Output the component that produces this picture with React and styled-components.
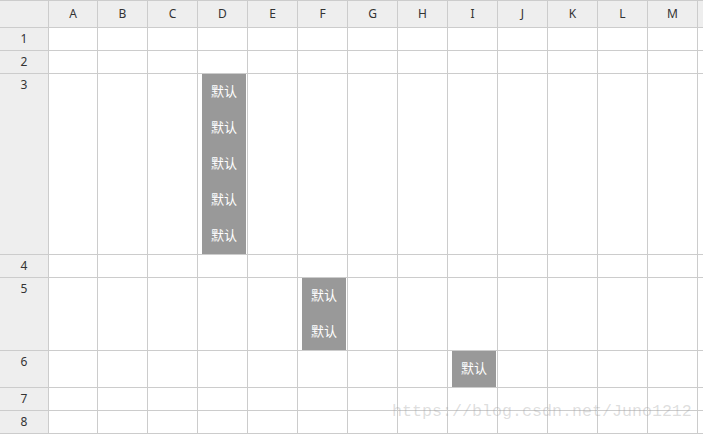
import styled, { createGlobalStyle } from "styled-components"

const COLUMNS = ["A", "B", "C", "D", "E", "F", "G", "H", "I", "J", "K", "L", "M"]

// rows of the sheet; `col` + `count` say where the stacked buttons sit
const ROWS = [
    { n: 1 },
    { n: 2 },
    { n: 3, col: "D", count: 5 },
    { n: 4 },
    { n: 5, col: "F", count: 2 },
    { n: 6, col: "I", count: 1 },
    { n: 7 },
    { n: 8 },
]

const GlobalStyle = createGlobalStyle`
    html, body {
        margin: 0;
        padding: 0;
        background: #ffffff;
        overflow: hidden;
    }
`

export default function App() {
    return (
        <>
            <GlobalStyle />
            <Page>
                <Sheet>
                    <Corner />
                    {COLUMNS.map((c) => (
                        <ColHeader key={c}>{c}</ColHeader>
                    ))}
                    {/* next column, cut off by the window */}
                    <Corner />

                    {ROWS.map((r) => (
                        <Row key={r.n} r={r} />
                    ))}
                </Sheet>
                <Watermark>https://blog.csdn.net/Juno1212</Watermark>
            </Page>
        </>
    )
}

function Row({ r }) {
    return (
        <>
            <RowHeader>{r.n}</RowHeader>
            {COLUMNS.map((c) => (
                <Cell key={c}>
                    {r.col === c && (
                        <Stack>
                            {Array.from({ length: r.count }).map((_, i) => (
                                <Tag key={i}>默认</Tag>
                            ))}
                        </Stack>
                    )}
                </Cell>
            ))}
            <Cell />
        </>
    )
}

const Page = styled.div`
    position: relative;
    width: 703px;
    height: 434px;
    overflow: hidden;
`

const Sheet = styled.div`
    display: grid;
    grid-template-columns: 49px 49px repeat(13, 50px);
    grid-auto-rows: auto;
    border-top: 1px solid #cccccc;
    width: max-content;
    font-family: "Noto Sans", "Liberation Sans", sans-serif;
    font-size: 12px;
    color: #333333;
`

const Corner = styled.div`
    height: 26px;
    background: #eeeeee;
    border-right: 1px solid #cccccc;
    border-bottom: 1px solid #cccccc;
`

const ColHeader = styled(Corner)`
    display: flex;
    align-items: center;
    justify-content: center;
    line-height: 1;
`

const RowHeader = styled.div`
    min-height: 22px;
    background: #eeeeee;
    border-right: 1px solid #cccccc;
    border-bottom: 1px solid #cccccc;
    text-align: center;
    line-height: 22px;
`

const Cell = styled.div`
    min-height: 22px;
    border-right: 1px solid #cccccc;
    border-bottom: 1px solid #cccccc;
    padding-left: 4px;
    box-sizing: content-box;
    display: flex;
`

const Stack = styled.div`
    display: flex;
    flex-direction: column;
    width: 44px;
    background: #999999;
`

const Tag = styled.div`
    height: 36px;
    box-sizing: border-box;
    padding-bottom: 3px;
    display: flex;
    align-items: center;
    justify-content: center;
    color: #ffffff;
    font-family: "Noto Sans CJK SC", sans-serif;
    font-size: 13px;
`

const Watermark = styled.div`
    position: absolute;
    left: 392px;
    top: 401px;
    font-family: "Liberation Mono", monospace;
    font-size: 16.67px;
    line-height: 22px;
    color: rgba(160, 160, 160, 0.35);
    white-space: nowrap;
    pointer-events: none;
`
